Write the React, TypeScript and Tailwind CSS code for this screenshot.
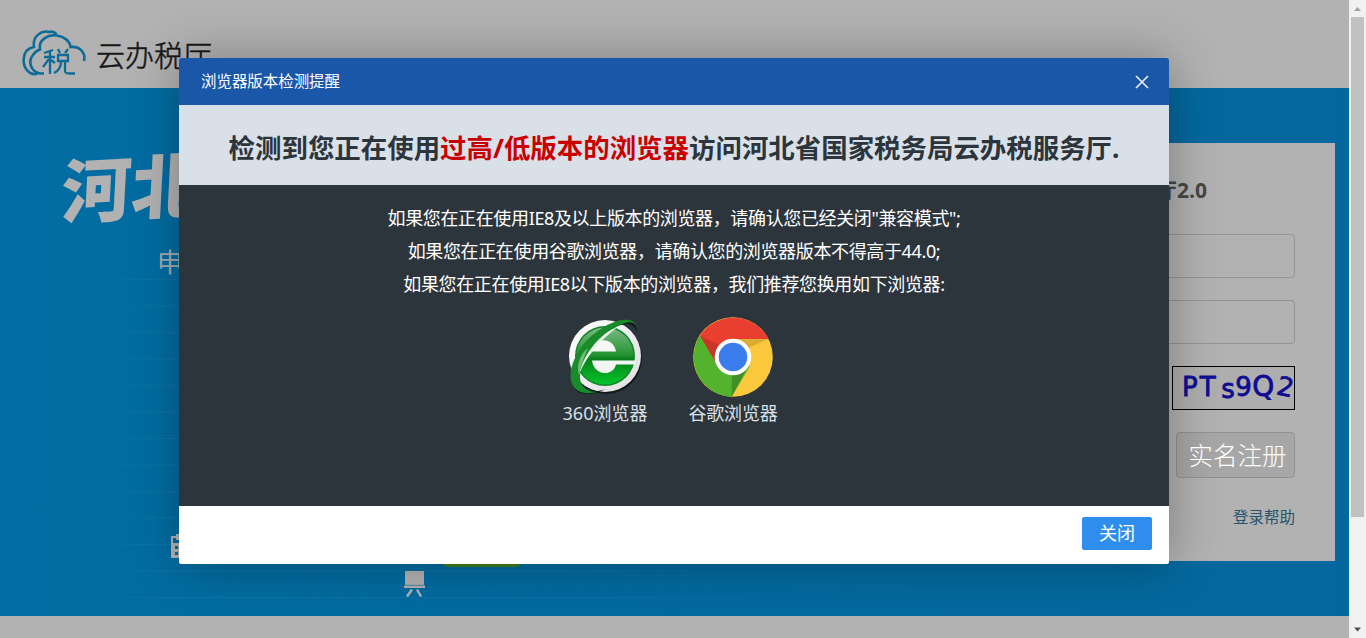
import React from "react";

const cjk = "font-['Noto_Sans','Noto_Sans_CJK_SC',sans-serif]";

function CloudLogo() {
  return (
    <svg width="66" height="50" viewBox="0 0 66 50" fill="none" stroke="#149ad8" strokeWidth="2.6" strokeLinecap="butt">
      <path d="M16 44C8 48 1 39 1.700 30C2.200 23 6 19 12 18C10 7 20 1 27 3C30 2 33 3.500 34.500 5" />
      <path d="M22 44.500H18C8 42 6 32 11 26C13 23 16 21 18 20.500C16 11 26 5 35 6.500C42 7.500 48 12 48.500 18C58 17 64 24 62 32" />
      <g strokeWidth="2.300">
        <path d="M31 21L22 24M22 28H33M28 23V45M27 30L21 38M29 31L33 34M36 20L38 24M46 20L43 24M36 26H46V32H36ZM39 32C39 38 37 42 32 44M43 32V42C43 45 46 44.500 53 44.500" />
      </g>
    </svg>
  );
}

function Browser360() {
  return (
    <svg width="80" height="80" viewBox="0 0 80 80">
      <defs>
        <linearGradient id="leaf" x1="0" y1="0" x2="0" y2="1">
          <stop offset="0" stopColor="#7cb884" />
          <stop offset=".48" stopColor="#269532" />
          <stop offset=".55" stopColor="#08801b" />
          <stop offset="1" stopColor="#05c42b" />
        </linearGradient>
        <linearGradient id="plate" x1="0" y1="0" x2="1" y2="1">
          <stop offset="0" stopColor="#fff" />
          <stop offset="1" stopColor="#dedede" />
        </linearGradient>
      </defs>
      <circle cx="41" cy="41" r="36" fill="#12181b" />
      <circle cx="40" cy="39" r="36" fill="url(#plate)" />
      <circle cx="40" cy="39" r="30" fill="#12852a" />
      <circle cx="40" cy="39" r="28.500" fill="url(#leaf)" />
      <path d="M27 34.500C29 20 48 19 51 34.500Z" fill="#f5f8f5" />
      <path d="M27 43.500H70V47.500H51C48 60 29 59 27 43.500Z" fill="#f2f5f2" />
      <path d="M72 12C68 -3 44 3 23 24C4 45 -1 76 21 77C28 77 35 75 41 72C32 75 23 76 18 71C9 62 15 43 29 27C46 9 66 -1 72 15Z" fill="#101c18" />
      <path d="M72 10C68 -3 44 2 22 23C3 44 -2 73 20 76C24 76.500 28 76 32 75C20 75 12 67 16 53C21 37 34 21 48 12C60 4 69 3 72 10Z" fill="#198b2b" />
      <path d="M53 10C38 14 18 36 14 58C20 41 36 22 53 10Z" fill="#e7f6e8" />
      <path d="M14 58C15 50 20 38 23 31C15 37 11 49 14 58Z" fill="#72bd75" />
    </svg>
  );
}

function Chrome() {
  return (
    <svg width="80" height="80" viewBox="0 0 80 80">
      <circle cx="40" cy="40" r="39.800" fill="#fbc83d" />
      <path d="M7.300 18A40 40 0 0 0 38.500 80L57 49L40 40Z" fill="#54b32c" />
      <path d="M7 18.500A40 40 0 0 1 75.700 22H40L22 44Z" fill="#e93f30" />
      <path d="M7 18.500L26 28L22 44Z" fill="#c9352b" />
      <path d="M75.500 22H40L55 31Z" fill="#dcac33" />
      <path d="M38.500 80L39 57L53 53Z" fill="#438f27" />
      <circle cx="40" cy="40" r="18.300" fill="#fff" />
      <circle cx="40" cy="40" r="14.300" fill="#3b7ded" />
    </svg>
  );
}

function Grid() {
  const rows = Array.from({ length: 13 }, (_, i) => 51 + i * 26.5);
  const cols = Array.from({ length: 24 }, (_, i) => 25 + i * 26.5);
  return (
    <svg className="absolute left-[75px] top-[140px]" width="700" height="388" viewBox="0 0 700 388">
      <defs>
        <linearGradient id="fade" x1="0" x2="1" y1="0" y2="0">
          <stop offset="0" stopColor="#fff" stopOpacity="0" />
          <stop offset=".15" stopColor="#fff" stopOpacity=".09" />
          <stop offset=".7" stopColor="#fff" stopOpacity=".07" />
          <stop offset="1" stopColor="#fff" stopOpacity="0" />
        </linearGradient>
      </defs>
      {rows.map((y) => (
        <rect key={y} x="0" y={y} width="700" height="1" fill="url(#fade)" />
      ))}
      {cols.map((x) => (
        <rect key={x} x={x} y="40" width="1" height="348" fill="#fff" opacity=".025" />
      ))}
    </svg>
  );
}

function Banner() {
  return (
    <main className="relative flex h-[528px] shrink-0 justify-end overflow-hidden bg-linear-to-r from-[#039ce8] to-[#0796e2] pr-[14px] pt-[55px]">
      <Grid />
      <div className="absolute left-[62px] top-[52px] origin-left -rotate-3 -skew-x-6 whitespace-nowrap font-['Noto_Sans_CJK_SC',sans-serif] text-[70px] font-black leading-[96px] text-white">
        河北
      </div>
      <div className="absolute left-[157px] top-[155px] whitespace-nowrap font-['Noto_Sans_CJK_SC',sans-serif] text-[26px] leading-9 text-white/95">
        申报
      </div>
      <svg className="absolute left-[171px] top-[446px]" width="26" height="24" viewBox="0 0 26 24" fill="#fff">
        <path fillRule="evenodd" d="M0 2H5V0H8V2H25V24H0ZM2 4V9H23V4ZM4 12V15H7V12ZM4 18V21H7V18ZM11 12V15H14V12ZM11 18V21H14V18Z" />
        <path d="M5 0H8V6H5Z" />
      </svg>
      <div className="absolute left-[441px] top-[440px] h-[39px] w-[82px] rounded-lg bg-[#5db529]" />
      <svg className="absolute left-[404px] top-[482px]" width="21" height="28" viewBox="0 0 21 28" fill="#fff">
        <path d="M1 1H20V15H21V18H0V15H1Z" />
        <path d="M0 15.300H21" stroke="#4ab0de" strokeWidth=".8" />
        <path d="M8 19.500L3 26.500M13 19.500L17 26.500" stroke="#fff" strokeWidth="2.500" />
      </svg>
      <section className="flex h-[418px] w-[400px] flex-col items-end bg-white px-10 pt-[30px]">
        <h2 className="h-[61px] whitespace-nowrap pr-[88px] font-['Open_Sans','Noto_Sans_CJK_SC',sans-serif] text-[21px] font-bold leading-[34px] text-[#666]">
          云办税厅2.0
        </h2>
        <div className="h-11 w-full shrink-0 rounded border border-[#d5d5d5]" />
        <div className="mt-[22px] h-11 w-full shrink-0 rounded border border-[#d5d5d5]" />
        <div className="mt-[22px] h-11 w-[123px] shrink-0 overflow-hidden border border-black bg-[#fafafa] pl-[9px]">
          <div className="flex font-['DejaVu_Sans',sans-serif] text-[26px] leading-[40px] text-[#1512d0] [-webkit-text-stroke:0.8px_#1512d0]">
            <span className="w-[19px]">P</span>
            <span className="w-[23px]">T</span>
            <span className="w-[15px] pt-[2px]">s</span>
            <span className="w-[18px]">9</span>
            <span className="w-[27px] text-[28px]">Q</span>
            <span className="rotate-12">2</span>
          </div>
        </div>
        <button className="mt-[22px] h-[46px] w-[119px] shrink-0 whitespace-nowrap rounded border border-[#d2d2d2] bg-[#efefef] pt-px pl-1 font-['Noto_Sans_CJK_SC',sans-serif] text-[24.500px] font-light text-white">
          <span className="relative z-10">实名注册</span>
        </button>
        <a className="mt-[26px] whitespace-nowrap font-['Noto_Sans_CJK_SC',sans-serif] text-[15.500px] leading-6 text-[#39789b]">登录帮助</a>
      </section>
    </main>
  );
}

function Scrollbar() {
  return (
    <aside className="relative z-10 flex h-[638px] w-[17px] shrink-0 flex-col items-center justify-between bg-[#f1f1f1]">
      <svg width="17" height="17" viewBox="0 0 17 17" className="shrink-0">
        <path d="M5 11L8.500 7L12 11Z" fill="#a3a3a3" />
      </svg>
      <div className="h-[500px] w-[13px] shrink-0 bg-[#c1c1c1]" />
      <div className="grow" />
      <svg width="17" height="17" viewBox="0 0 17 17" className="shrink-0">
        <path d="M5 6.500L8.500 10.500L12 6.500Z" fill="#505050" />
      </svg>
    </aside>
  );
}

function Dialog() {
  return (
    <div className={`flex h-[506px] w-[990px] flex-col overflow-hidden rounded-[2px] bg-white shadow-[1px_1px_50px_rgba(0,0,0,0.3)] ${cjk}`}>
      <header className="flex h-[47px] shrink-0 items-center justify-between bg-[#1a57a9] pl-[22px] pr-[20px] text-[15.450px] text-white">
        <span>浏览器版本检测提醒</span>
        <svg width="14" height="14" viewBox="0 0 14 14" stroke="#e8eef6" strokeWidth="1.700">
          <path d="M1 1L13 13M13 1L1 13" />
        </svg>
      </header>
      <h1 className="flex h-20 shrink-0 items-center justify-center whitespace-nowrap bg-[#d9e0e8] pt-[8px] text-[26.450px] font-bold text-[#2d353c]">
        检测到您正在使用<span className="text-[#c90000]">过高/低版本的浏览器</span>访问河北省国家税务局云办税服务厅.
      </h1>
      <div className="flex h-[321px] shrink-0 flex-col items-center whitespace-nowrap bg-[#2d353c] pt-[17px] text-[18px] leading-[33px] text-white">
        <p className="tracking-[-0.36px]">如果您在正在使用IE8及以上版本的浏览器，请确认您已经关闭"兼容模式";</p>
        <p className="tracking-[-0.36px]">如果您在正在使用谷歌浏览器，请确认您的浏览器版本不得高于44.0;</p>
        <p className="tracking-[-0.36px]">如果您在正在使用IE8以下版本的浏览器，我们推荐您换用如下浏览器:</p>
        <div className="mt-4 mr-[10px] flex text-[#d9e0e8]">
          <div className="flex w-32 flex-col items-center">
            <Browser360 />
            <span>360浏览器</span>
          </div>
          <div className="flex w-32 flex-col items-center">
            <Chrome />
            <span className="tracking-[-0.2px]">谷歌浏览器</span>
          </div>
        </div>
      </div>
      <footer className="flex grow items-start justify-end pr-[17px] pt-[11px]">
        <button className="h-[33px] w-[70px] rounded-[2px] border border-[#2e8ded] bg-[#2e8ded] text-[18px] leading-[31px] text-white">关闭</button>
      </footer>
    </div>
  );
}

export default function App() {
  return (
    <div className="relative flex h-[638px] w-[1366px] overflow-hidden bg-white">
      <div className="flex grow flex-col">
        <header className="flex h-[88px] shrink-0 items-start pl-[22px] pt-[29px]">
          <CloudLogo />
          <span className="ml-[8px] mt-[3px] font-['Noto_Sans_CJK_SC',sans-serif] text-[29px] font-light leading-[44px] text-[#222] [-webkit-text-stroke:0.5px_#222]">云办税厅</span>
        </header>
        <Banner />
      </div>
      <Scrollbar />
      <div className="absolute inset-y-0 left-0 w-[1349px] overflow-hidden bg-black/30 pl-[179px] pt-[58px]">
        <Dialog />
      </div>
    </div>
  );
}
